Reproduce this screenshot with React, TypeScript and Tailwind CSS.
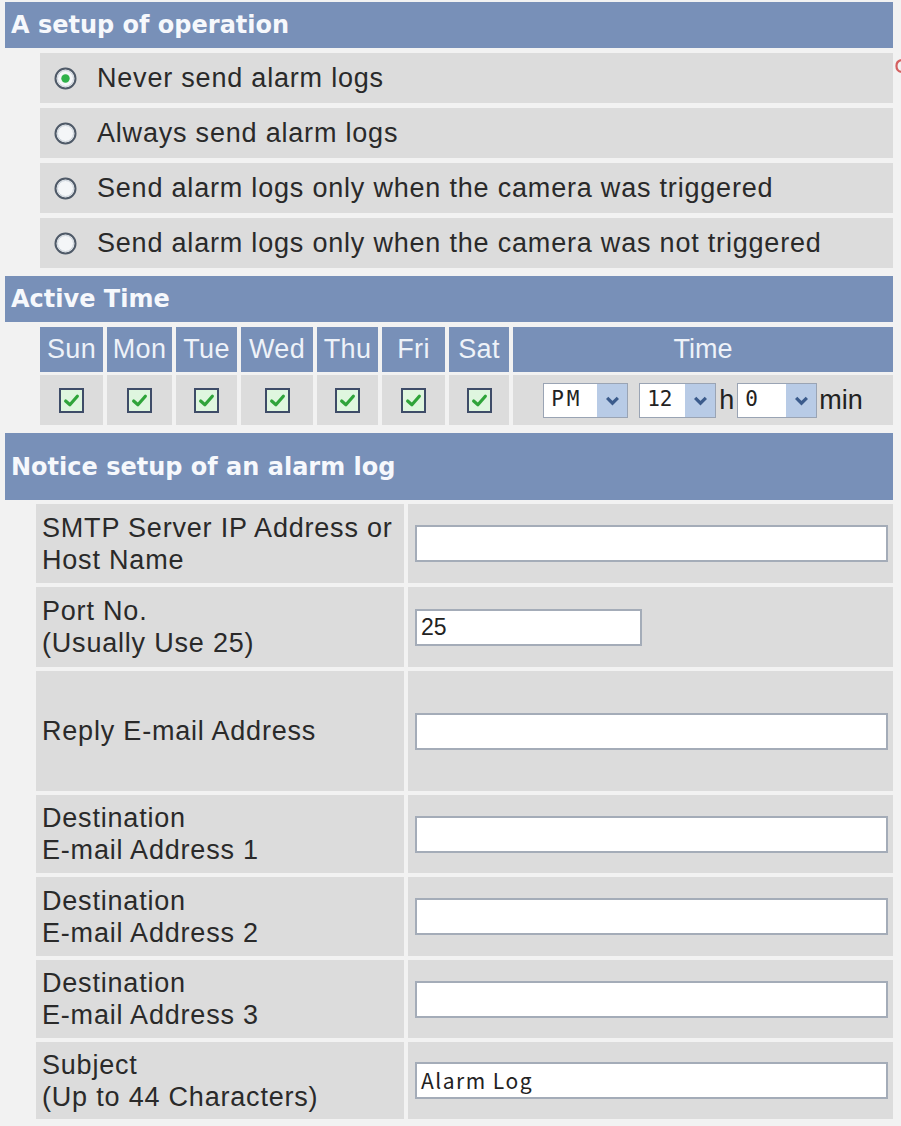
import React from 'react';

const LABEL = "font-['Liberation_Sans',Arial,sans-serif]";

function SectionHeader({ title, tall }: { title: string; tall?: boolean }) {
  return (
    <div
      className={`${tall ? 'h-[67px]' : 'h-[46px]'} bg-[#7890b8] flex items-center pl-[6px] font-['DejaVu_Sans',Verdana,sans-serif] font-bold text-[24px] text-[#f6f8fc]`}
    >
      {title}
    </div>
  );
}

function Radio({ checked }: { checked?: boolean }) {
  return (
    <svg width="23" height="23" viewBox="0 0 23 23" className="shrink-0">
      <circle cx="11.5" cy="11.5" r="10" fill="#f4f6f8" stroke="#4f5a68" strokeWidth="2" />
      <circle cx="11.5" cy="11.5" r="8" fill="none" stroke="#c8d0d8" strokeWidth="1" />
      {checked && <circle cx="11.5" cy="11.5" r="4.2" fill="#2fb24a" />}
    </svg>
  );
}

function Check() {
  return (
    <div className="w-[25px] h-[25px] border-2 border-[#3e4c68] bg-[#dff6df] flex items-center justify-center">
      <svg width="17" height="15" viewBox="0 0 16 14">
        <path d="M2.5 7.5 L6.5 11 L13.5 3" fill="none" stroke="#2fa43a" strokeWidth="3" strokeLinecap="round" strokeLinejoin="round" />
      </svg>
    </div>
  );
}

function Select({ value, w, spaced }: { value: string; w: string; spaced?: boolean }) {
  return (
    <div className={`${w} h-[35px] bg-white border border-[#9aa4b4] flex items-stretch`}>
      <span
        className={`flex-1 flex items-center pl-[7px] text-[21px] text-[#222] font-['DejaVu_Sans_Mono',monospace] ${spaced ? 'tracking-[3px]' : ''}`}
      >
        {value}
      </span>
      <span className="w-[30px] bg-[#b8cbe6] flex items-center justify-center">
        <svg width="15" height="11" viewBox="0 0 14 10">
          <path d="M2 2.5 L7 7.5 L12 2.5" fill="none" stroke="#3b5b8c" strokeWidth="3" />
        </svg>
      </span>
    </div>
  );
}

const options = [
  'Never send alarm logs',
  'Always send alarm logs',
  'Send alarm logs only when the camera was triggered',
  'Send alarm logs only when the camera was not triggered',
];

const days = ['Sun', 'Mon', 'Tue', 'Wed', 'Thu', 'Fri', 'Sat'];

const fields: { label: string[]; h: string; value?: string; short?: boolean; jp?: boolean }[] = [
  { label: ['SMTP Server IP Address or', 'Host Name'], h: 'h-[79px]' },
  { label: ['Port No.', '(Usually Use 25)'], h: 'h-[80px]', value: '25', short: true },
  { label: ['Reply E-mail Address'], h: 'h-[120px]' },
  { label: ['Destination', 'E-mail Address 1'], h: 'h-[78px]' },
  { label: ['Destination', 'E-mail Address 2'], h: 'h-[79px]' },
  { label: ['Destination', 'E-mail Address 3'], h: 'h-[78px]' },
  { label: ['Subject', '(Up to 44 Characters)'], h: 'h-[77px]', value: 'Alarm Log', jp: true },
];

export default function App() {
  return (
    <div className="w-[901px] h-[1126px] bg-[#f2f2f2] overflow-hidden flex">
      <div className="w-[893px] shrink-0 pl-[5px] pt-[2px] flex flex-col">
        <SectionHeader title="A setup of operation" />

        <div className="ml-[35px] mt-[5px] flex flex-col gap-[5px]">
          {options.map((o, i) => (
            <div key={o} className="h-[50px] bg-[#dcdcdc] flex items-center pl-[14px] gap-[20px]">
              <Radio checked={i === 0} />
              <span className={`${LABEL} text-[27px] tracking-[0.8px] text-[#2a2a2a]`}>{o}</span>
            </div>
          ))}
        </div>

        <div className="mt-[8px]">
          <SectionHeader title="Active Time" />
        </div>

        <div className="ml-[35px] mt-[5px] grid grid-cols-[63px_65px_61px_72px_61px_63px_60px_1fr] grid-rows-[45px_50px] gap-x-[4px] gap-y-[3px]">
          {days.map((d) => (
            <div key={d} className={`bg-[#7890b8] flex items-center justify-center ${LABEL} text-[27px] tracking-[0.4px] text-[#eef2f8]`}>
              {d}
            </div>
          ))}
          <div className={`bg-[#7890b8] flex items-center justify-center ${LABEL} text-[27px] text-[#eef2f8]`}>Time</div>
          {days.map((d) => (
            <div key={d + 'c'} className="bg-[#dcdcdc] flex items-center justify-center">
              <Check />
            </div>
          ))}
          <div className={`bg-[#dcdcdc] flex items-center justify-center ${LABEL} text-[27px] text-[#222]`}>
            <Select value="PM" w="w-[85px]" spaced />
            <span className="w-[11px]" />
            <Select value="12" w="w-[77px]" />
            <span className="px-[3px]">h</span>
            <Select value="0" w="w-[80px]" />
            <span className="pl-[2px]">min</span>
          </div>
        </div>

        <div className="mt-[8px]">
          <SectionHeader title="Notice setup of an alarm log" tall />
        </div>

        <div className="ml-[31px] mt-[4px] grid grid-cols-[368px_1fr] gap-[4px]">
          {fields.map((f) => (
            <React.Fragment key={f.label.join()}>
              <div className={`${f.h} bg-[#dcdcdc] flex flex-col justify-center pl-[6px] ${LABEL} text-[27px] leading-[32px] tracking-[0.8px] text-[#2a2a2a]`}>
                {f.label.map((l) => (
                  <div key={l}>{l}</div>
                ))}
              </div>
              <div className={`${f.h} bg-[#dcdcdc] flex items-center pl-[7px] pr-[5px]`}>
                <div
                  className={`${f.short ? 'w-[227px]' : 'w-full'} h-[37px] bg-white border-2 border-[#a4acb8] flex items-center pl-[4px] text-[#222] ${
                    f.jp
                      ? "font-['Noto_Sans_CJK_JP',sans-serif] text-[21px] tracking-[1.5px]"
                      : `${LABEL} text-[23px]`
                  }`}
                >
                  {f.value ?? ''}
                </div>
              </div>
            </React.Fragment>
          ))}
        </div>
      </div>
      <div className="w-[8px] pt-[58px] pl-[2px]">
        <svg width="6" height="16" viewBox="0 0 6 16">
          <path d="M6 2 A6 6 0 0 0 1.5 8 A6 6 0 0 0 6 14" fill="none" stroke="#d46060" strokeWidth="2.2" />
        </svg>
      </div>
    </div>
  );
}
